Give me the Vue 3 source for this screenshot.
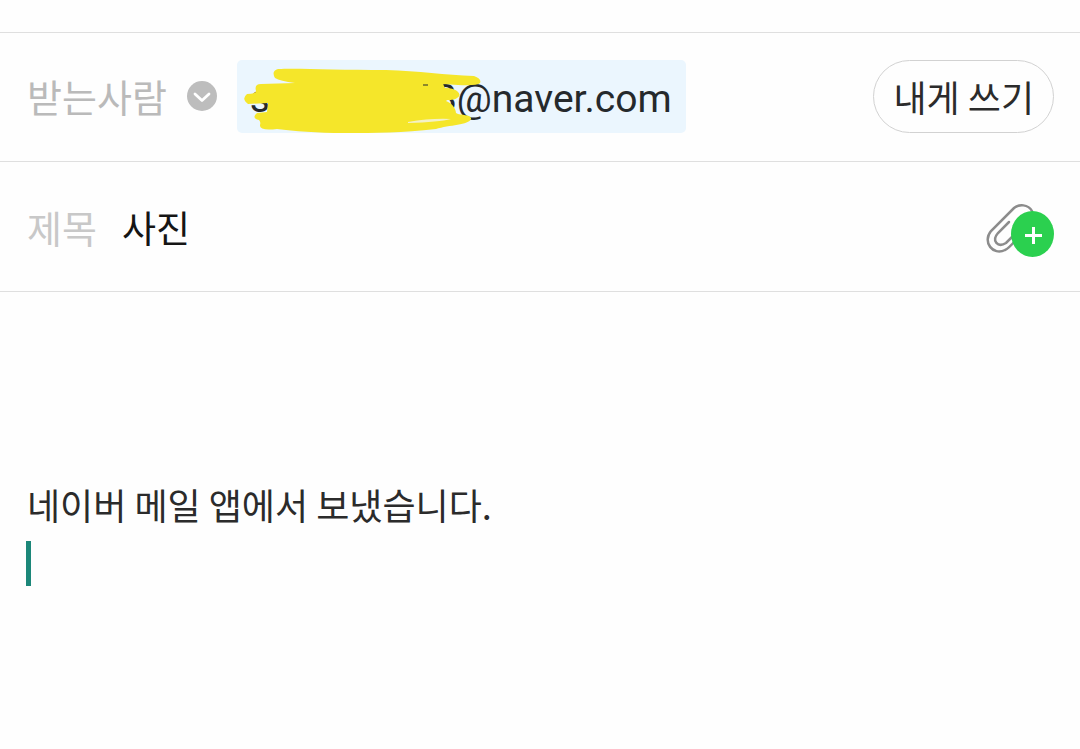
<script setup>
import { ref } from 'vue'

const subject = ref('사진')
const body = ref('네이버 메일 앱에서 보냈습니다.\n')
</script>

<template>
  <form class="compose" @submit.prevent>
    <div class="strip"></div>
    <div class="row recipients">
      <span class="label">받는사람</span>
      <button class="expand" type="button" aria-label="참조 펼치기">
        <svg viewBox="0 0 30 30" width="30" height="30">
          <circle cx="15" cy="15" r="15" fill="#bdbdbd" />
          <path d="M8 13 L15 19.5 L22 13" fill="none" stroke="#fff" stroke-width="2.8" stroke-linecap="round" stroke-linejoin="round" />
        </svg>
      </button>
      <div class="chip">
        <span class="first">s</span>
        <span>8@naver.com</span>
        <svg class="scribble" viewBox="0 0 250 73" width="250" height="73" aria-hidden="true">
          <path fill="#f5e62a" d="M41 9 C60 8 100 10 149 10 C182 11 208 15 237 16 Q245 19 243 23 Q240 26 221 25 L206 24 L208 28 C214 28 217 29 220 31 Q225 35 220 38 C216 41 210 39 209 41 C215 43 219 49 219 53 C224 56 235 54 234 59 C232 65 212 65 199 69 C165 73 140 73 107 73 C80 73 57 71 40 69 Q22 71 23 65 Q24 62 22 60 Q14 58 20 53 L30 52 L31 43 L11 44 Q4 39 10 34 Q19 34 19 31 Q17 24 24 24 L58 23 Q43 21 38 18 Q34 11 41 9Z" />
          <path fill="#f4f1c7" d="M171 62 Q194 58 214 59 Q202 62 171 63Z" />
          <path d="M186 25 L191 25" fill="none" stroke="#25292c" stroke-width="1" />
        </svg>
      </div>
      <button class="self" type="button">내게 쓰기</button>
    </div>
    <div class="row">
      <label class="label light" for="subject">제목</label>
      <input id="subject" v-model="subject" class="subject" type="text" />
      <button class="attach" type="button" aria-label="파일 첨부">
        <svg viewBox="0 0 70 56" width="70" height="56">
          <g fill="none" stroke="#8c8c8c" stroke-width="2.5" stroke-linecap="round">
            <path d="M48 7 C44 0 35 0 30 4 L7 27 C-2 38 9 52 21 46 Q24 45 32 36" />
            <path d="M25 18 L14 29 C7 37 14 44 22 39 L32 29" />
          </g>
          <ellipse cx="48.5" cy="30" rx="21.5" ry="23" fill="#2bd04f" />
          <path d="M41 31.5 H58 M49.5 23 V40" stroke="#fff" stroke-width="3" fill="none" />
        </svg>
      </button>
    </div>
    <div class="message">
      <textarea v-model="body" class="text" rows="4" aria-label="본문" spellcheck="false"></textarea>
      <span class="caret"></span>
    </div>
  </form>
</template>

<style>
body {
  background: #fefefe;
}
</style>

<style scoped>
.compose {
  font-family: "Noto Sans CJK KR", sans-serif;
  font-size: 36px;
  color: #2b2b2b;
}
button,
input,
textarea {
  margin: 0;
  padding: 0;
  border: 0;
  background: none;
  font: inherit;
  color: inherit;
  outline: none;
}
.strip {
  height: 32px;
  border-bottom: 1px solid #dfdfdf;
}
.row {
  display: flex;
  align-items: center;
  box-sizing: border-box;
  height: 130px;
  padding: 0 26px 0 27px;
  border-bottom: 1px solid #dfdfdf;
}
.recipients {
  height: 129px;
  padding-bottom: 2px;
}
.label {
  font-size: 38px;
  line-height: 56px;
  color: #bababa;
}
.light {
  color: #c8c8c8;
}
.expand {
  display: flex;
  margin: 0 20px;
}
.chip {
  position: relative;
  display: flex;
  box-sizing: border-box;
  padding: 4px 14px 0 13px;
  height: 73px;
  border-radius: 5px;
  background: #ebf6fe;
  font-family: Roboto, sans-serif;
  font-size: 39px;
  line-height: 70px;
  color: #25292c;
}
.first {
  width: 185px;
}
.scribble {
  position: absolute;
  left: 0;
  top: 0;
}
.self {
  box-sizing: border-box;
  height: 73px;
  margin-left: auto;
  padding: 0 19px;
  border: 1px solid #d2d2d2;
  border-radius: 37px;
  line-height: 70px;
}
.subject {
  flex: 1;
  min-width: 0;
  margin-left: 25px;
  font-size: 37px;
  line-height: 56px;
  color: #151515;
}
.attach {
  display: flex;
  margin-top: 10px;
}
.message {
  position: relative;
  padding: 184px 27px 0;
}
.text {
  display: block;
  width: 100%;
  line-height: 56px;
  resize: none;
  overflow: hidden;
}
.caret {
  position: absolute;
  left: 26px;
  top: 249px;
  width: 5px;
  height: 45px;
  background: #1c8779;
}
</style>
